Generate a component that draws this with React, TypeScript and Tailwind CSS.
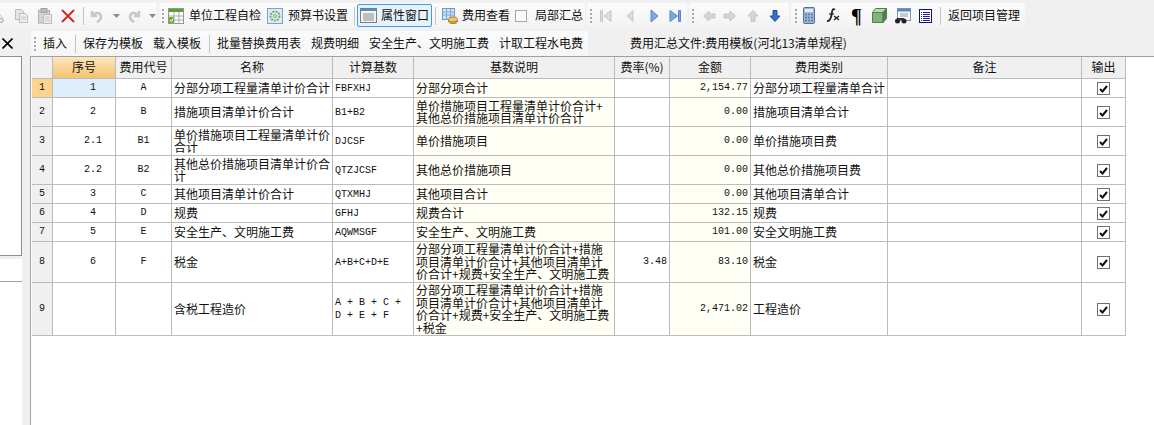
import type { ReactNode } from "react";

const font = "font-['Noto_Sans_CJK_SC','Noto_Sans',sans-serif]";

// toolbar bits
function Grip({ className = "" }: { className?: string }) {
  return (
    <div className={`flex flex-col gap-[2px] w-[2px] shrink-0 ${className}`}>
      {[0, 1, 2, 3].map((i) => (
        <div key={i} className="w-[2px] h-[2px] bg-[#a8a8a8]" />
      ))}
    </div>
  );
}

function Sep({ className = "" }: { className?: string }) {
  return <div className={`w-px h-[18px] bg-[#c4c4c4] shrink-0 ${className}`} />;
}

function Group({ className, children }: { className: string; children: ReactNode }) {
  return (
    <div className={`flex items-center h-[25px] rounded-[3px] bg-gradient-to-b from-[#fbfbfb] to-[#f3f3f3] shrink-0 ${className}`}>
      {children}
    </div>
  );
}

function Scissors() {
  return (
    <svg width="5" height="8" viewBox="0 0 5 8" className="shrink-0 mt-[6px]">
      <circle cx="1" cy="5.500" r="2" fill="none" stroke="#bdbdbd" strokeWidth="1.500" />
      <path d="M0 0l3 3" stroke="#c8c8c8" />
    </svg>
  );
}

function Doc({ className = "" }: { className?: string }) {
  return (
    <svg width="15" height="16" viewBox="0 0 15 16" className={`shrink-0 ${className}`}>
      <path d="M1.500 1.500h6l2 2v8h-8z" fill="#e6e6e6" stroke="#bdbdbd" />
      <path d="M5.500 5.500h6l2 2v7h-8z" fill="#eee" stroke="#bdbdbd" />
      <path d="M7 9h5M7 11h5" stroke="#c8c8c8" />
    </svg>
  );
}

function Paste({ className = "" }: { className?: string }) {
  return (
    <svg width="14" height="16" viewBox="0 0 14 16" className={`shrink-0 ${className}`}>
      <rect x="0.500" y="2.500" width="11" height="12.500" fill="#d4d4d4" stroke="#b0b0b0" />
      <rect x="3" y="0.500" width="6" height="4" fill="#bbb" stroke="#a4a4a4" />
      <path d="M5.500 6.500h8v9h-8z" fill="#efefef" stroke="#b8b8b8" />
      <path d="M7 9h5M7 11h5M7 13h5" stroke="#c8c8c8" />
    </svg>
  );
}

function RedX({ className = "" }: { className?: string }) {
  return (
    <svg width="14" height="14" viewBox="0 0 14 14" className={`shrink-0 ${className}`}>
      <path d="M1 1l12 12M13 1L1 13" stroke="#d8262c" strokeWidth="2" />
    </svg>
  );
}

function Undo({ flip = false, className = "" }: { flip?: boolean; className?: string }) {
  return (
    <svg width="13" height="14" viewBox="0 0 13 14" className={`shrink-0 ${flip ? "-scale-x-100" : ""} ${className}`}>
      <path d="M2 2v5h5" fill="none" stroke="#c8c8c8" strokeWidth="2.500" />
      <path d="M3 6c2-3 8-3 8 2 0 2-2 4-4 5" fill="none" stroke="#c8c8c8" strokeWidth="2.500" />
    </svg>
  );
}

function Caret({ className = "" }: { className?: string }) {
  return (
    <svg width="7" height="4" viewBox="0 0 7 4" className={`shrink-0 ${className}`}>
      <path d="M0 0h7L3.500 4z" fill="#8a8a8a" />
    </svg>
  );
}

function SheetIcon({ className = "" }: { className?: string }) {
  return (
    <svg width="16" height="16" viewBox="0 0 16 16" className={`shrink-0 ${className}`}>
      <rect x="0.500" y="0.500" width="15" height="15" fill="#fff" stroke="#8f9a8f" />
      <rect x="1" y="1" width="14" height="3" fill="#5c9e3c" />
      <path d="M1 8h14M1 12h14M6 4v12M11 4v12" stroke="#a9a9a9" />
      <rect x="1" y="9" width="5" height="6" fill="#6fae32" />
      <path d="M2 12l1.500 1.500L5 10.500" fill="none" stroke="#fff" />
    </svg>
  );
}

function GearIcon({ className = "" }: { className?: string }) {
  return (
    <svg width="16" height="16" viewBox="0 0 16 16" className={`shrink-0 ${className}`}>
      <rect x="0.500" y="0.500" width="15" height="15" fill="#dcebf8" stroke="#7ba2c8" />
      <circle cx="8" cy="8" r="4.500" fill="none" stroke="#6fb26a" strokeWidth="2" strokeDasharray="2 1" />
      <circle cx="8" cy="8" r="1.500" fill="#e8f4e4" stroke="#6fb26a" />
    </svg>
  );
}

function WindowIcon({ className = "" }: { className?: string }) {
  return (
    <svg width="17" height="15" viewBox="0 0 17 15" className={`shrink-0 ${className}`}>
      <rect x="0.500" y="0.500" width="16" height="14" fill="#f4f4ec" stroke="#70808c" />
      <rect x="1" y="1" width="15" height="2" fill="#4d8fce" />
      <path d="M3 6h11M3 8h11M3 10h11M3 12h11" stroke="#8a8a8a" />
    </svg>
  );
}

function CostIcon({ className = "" }: { className?: string }) {
  return (
    <svg width="16" height="16" viewBox="0 0 16 16" className={`shrink-0 ${className}`}>
      <rect x="0.500" y="0.500" width="12" height="11" fill="#cfe3f5" stroke="#6f9ac4" />
      <path d="M1 4h11M1 7h11M4.500 1v10M8.500 1v10" stroke="#7fa9d1" />
      <ellipse cx="11" cy="13" rx="4.500" ry="2.500" fill="#dcb04e" stroke="#a88232" />
      <ellipse cx="11" cy="11.500" rx="4.500" ry="2.500" fill="#ecc86a" stroke="#a88232" />
    </svg>
  );
}

function Arrow({ d, fill, stroke, className = "" }: { d: string; fill: string; stroke: string; className?: string }) {
  return (
    <svg width="14" height="14" viewBox="0 0 14 14" className={`shrink-0 ${className}`}>
      <path d={d} fill={fill} stroke={stroke} />
    </svg>
  );
}

function CalcIcon({ className = "" }: { className?: string }) {
  return (
    <svg width="12" height="17" viewBox="0 0 12 17" className={`shrink-0 ${className}`}>
      <rect x="0.500" y="0.500" width="11" height="16" rx="1" fill="#9db4d6" stroke="#5a6f94" />
      <rect x="2" y="2" width="8" height="3" fill="#e4edf7" />
      <path d="M2 7.500h8M2 10.500h8M2 13.500h8" stroke="#5c78a6" strokeWidth="1.500" strokeDasharray="2 1" />
    </svg>
  );
}

function FxIcon({ className = "" }: { className?: string }) {
  return (
    <svg width="15" height="15" viewBox="0 0 15 15" className={`shrink-0 ${className}`}>
      <path d="M9 1.500C6 0 6 4 5.500 7S4.500 13.500 1 13" fill="none" stroke="#222" strokeWidth="1.800" />
      <path d="M3 6h5" stroke="#222" strokeWidth="1.200" />
      <path d="M8 8l5 4M13 8l-5 4" stroke="#222" strokeWidth="1.400" />
    </svg>
  );
}

function CubeIcon({ className = "" }: { className?: string }) {
  return (
    <svg width="15" height="15" viewBox="0 0 15 15" className={`shrink-0 ${className}`}>
      <path d="M.5 4.500h10.500v10H.5z" fill="#7fb577" stroke="#5a7a56" />
      <path d="M.5 4.500L3.500.5h11l-3.500 4z" fill="#b8d8ae" stroke="#5a7a56" />
      <path d="M11 4.500l3.500-4v10l-3.500 4z" fill="#4f7f4a" stroke="#5a7a56" />
    </svg>
  );
}

function FindIcon({ className = "" }: { className?: string }) {
  return (
    <svg width="17" height="16" viewBox="0 0 17 16" className={`shrink-0 ${className}`}>
      <rect x="3.500" y="0.500" width="13" height="12" fill="#f4f6fa" stroke="#7d93b5" />
      <rect x="4" y="1" width="12" height="2.500" fill="#4f86d0" />
      <path d="M6 6h8M6 8h8" stroke="#9a9a9a" />
      <circle cx="3.500" cy="13" r="2.500" fill="#222" />
      <circle cx="10" cy="13" r="2.500" fill="#222" />
      <rect x="3" y="10" width="7" height="2" fill="#333" />
    </svg>
  );
}

function ListIcon({ className = "" }: { className?: string }) {
  return (
    <svg width="13" height="14" viewBox="0 0 13 14" className={`shrink-0 ${className}`}>
      <rect x="0.500" y="0.500" width="12" height="13" fill="#fff" stroke="#10106e" />
      <path d="M2 3.500h1M4 3.500h7M2 5.500h1M4 5.500h7M2 7.500h1M4 7.500h7M2 9.500h1M4 9.500h7M2 11.500h1M4 11.500h7" stroke="#1c1c9c" />
    </svg>
  );
}

function CheckBox() {
  return (
    <span className="inline-flex items-center justify-center w-[13px] h-[13px] border border-[#707070] bg-white align-middle">
      <svg width="9" height="8" viewBox="0 0 9 8">
        <path d="M1 4l2.500 2.500L8 1" fill="none" stroke="#111" strokeWidth="2" />
      </svg>
    </span>
  );
}

type Row = {
  h: string;
  no: string;
  seq: string;
  code: string;
  name: string;
  base: string;
  desc: string;
  rate: string;
  amount: string;
  kind: string;
};

const rows: Row[] = [
  { h: "h-[19px]", no: "1", seq: "1", code: "A", name: "分部分项工程量清单计价合计", base: "FBFXHJ", desc: "分部分项合计", rate: "", amount: "2,154.77", kind: "分部分项工程量清单合计" },
  { h: "h-[29px]", no: "2", seq: "2", code: "B", name: "措施项目清单计价合计", base: "B1+B2", desc: "单价措施项目工程量清单计价合计+\n其他总价措施项目清单计价合计", rate: "", amount: "0.00", kind: "措施项目清单合计" },
  { h: "h-[29px]", no: "3", seq: "2.1", code: "B1", name: "单价措施项目工程量清单计价合计", base: "DJCSF", desc: "单价措施项目", rate: "", amount: "0.00", kind: "单价措施项目费" },
  { h: "h-[29px]", no: "4", seq: "2.2", code: "B2", name: "其他总价措施项目清单计价合计", base: "QTZJCSF", desc: "其他总价措施项目", rate: "", amount: "0.00", kind: "其他总价措施项目费" },
  { h: "h-[19px]", no: "5", seq: "3", code: "C", name: "其他项目清单计价合计", base: "QTXMHJ", desc: "其他项目合计", rate: "", amount: "0.00", kind: "其他项目清单合计" },
  { h: "h-[19px]", no: "6", seq: "4", code: "D", name: "规费", base: "GFHJ", desc: "规费合计", rate: "", amount: "132.15", kind: "规费" },
  { h: "h-[19px]", no: "7", seq: "5", code: "E", name: "安全生产、文明施工费", base: "AQWMSGF", desc: "安全生产、文明施工费", rate: "", amount: "101.00", kind: "安全文明施工费" },
  { h: "h-[41px]", no: "8", seq: "6", code: "F", name: "税金", base: "A+B+C+D+E", desc: "分部分项工程量清单计价合计+措施\n项目清单计价合计+其他项目清单计\n价合计+规费+安全生产、文明施工费", rate: "3.48", amount: "83.10", kind: "税金" },
  { h: "h-[53px]", no: "9", seq: "", code: "", name: "含税工程造价", base: "A + B + C +\nD + E + F", desc: "分部分项工程量清单计价合计+措施\n项目清单计价合计+其他项目清单计\n价合计+规费+安全生产、文明施工费\n+税金", rate: "", amount: "2,471.02", kind: "工程造价" },
];

const heads = ["序号", "费用代号", "名称", "计算基数", "基数说明", "费率(%)", "金额", "费用类别", "备注", "输出"];
const line = "border-r border-b border-[#bcbcbc]";
const mono = "font-['Liberation_Mono',monospace] text-[10px]";

export default function App() {
  return (
    <div className={`w-[1154px] h-[425px] overflow-hidden bg-white text-[12px] leading-[12.5px] text-[#111] ${font}`}>
      {/* main toolbar */}
      <div className="flex items-center gap-[2px] h-[31px] pb-[3px] pt-[3px] bg-[#f0f0f0]">
        <Group className="w-[157px]">
          <Scissors />
          <Doc className="ml-[9px]" />
          <Paste className="ml-[9px]" />
          <RedX className="ml-[9px]" />
          <Sep className="ml-[8px]" />
          <Undo className="ml-[6px]" />
          <Caret className="ml-[10px]" />
          <Undo flip className="ml-[8px]" />
          <Caret className="ml-[8px]" />
        </Group>
        <Group className="w-[426px]">
          <Grip className="ml-[3px]" />
          <SheetIcon className="ml-[4px]" />
          <span className="ml-[5px] shrink-0">单位工程自检</span>
          <GearIcon className="ml-[6px]" />
          <span className="ml-[5px] shrink-0">预算书设置</span>
          <Sep className="ml-[6px]" />
          <div className="flex items-center w-[75px] h-[23px] ml-[2px] border border-[#3d9be9] bg-[#e6f3fc] rounded-[2px] shrink-0">
            <WindowIcon className="ml-[2px]" />
            <span className="ml-[4px] shrink-0">属性窗口</span>
          </div>
          <Sep className="ml-[3px]" />
          <CostIcon className="ml-[6px]" />
          <span className="ml-[4px] shrink-0">费用查看</span>
          <span className="ml-[5px] w-[12px] h-[12px] border border-[#a8a8a8] bg-[#fbfbfb] shrink-0" />
          <span className="ml-[8px] shrink-0">局部汇总</span>
        </Group>
        <Group className="w-[100px]">
          <Grip className="ml-[3px]" />
          <Arrow className="ml-[7px]" d="M1.500 1.500h2v11h-2zM12 1.500v11L5 7z" fill="#dcdcdc" stroke="#c8c8c8" />
          <Arrow className="ml-[10px]" d="M10 1.500v11L4 7z" fill="#dcdcdc" stroke="#c8c8c8" />
          <Arrow className="ml-[10px]" d="M4 1v12l7-6z" fill="#7da7e4" stroke="#5c86c8" />
          <Arrow className="ml-[7px]" d="M10.500 1.500h2v11h-2zM2 1.500v11L9.500 7z" fill="#7da7e4" stroke="#5c86c8" />
        </Group>
        <Group className="w-[100px]">
          <Grip className="ml-[3px]" />
          <Arrow className="ml-[8px]" d="M1.500 7L7 2v3h6v4H7v3z" fill="#d6d6d6" stroke="#c4c4c4" />
          <Arrow className="ml-[7px]" d="M12.500 7L7 2v3H1v4h6v3z" fill="#d6d6d6" stroke="#c4c4c4" />
          <Arrow className="ml-[9px]" d="M7 1.500L12 7H9v5.500H5V7H2z" fill="#d6d6d6" stroke="#c4c4c4" />
          <Arrow className="ml-[8px]" d="M7 12.500L12 7H9V1.500H5V7H2z" fill="#2f6fc8" stroke="#1f4f9c" />
        </Group>
        <Group className="w-[234px]">
          <Grip className="ml-[4px]" />
          <CalcIcon className="ml-[6px]" />
          <FxIcon className="ml-[11px]" />
          <span className="ml-[10px] w-[10px] shrink-0 text-[20px] font-bold leading-none text-black font-['Liberation_Serif',serif]">¶</span>
          <CubeIcon className="ml-[11px]" />
          <FindIcon className="ml-[7px]" />
          <ListIcon className="ml-[8px]" />
          <Sep className="ml-[8px]" />
          <span className="ml-[7px] shrink-0">返回项目管理</span>
        </Group>
      </div>

      {/* secondary toolbar */}
      <div className="flex items-center h-[25px] bg-[#f0f0f0]">
        <svg width="11" height="11" viewBox="0 0 11 11" className="ml-[2px] shrink-0">
          <path d="M.5.5l10 10M10.500.5l-10 10" stroke="#000" strokeWidth="1.600" />
        </svg>
        <div className="flex items-center h-[25px] w-[557px] ml-[18px] rounded-[3px] bg-gradient-to-b from-[#fbfbfb] to-[#f5f5f5] shrink-0">
          <Grip className="ml-[3px]" />
          <span className="ml-[7px] shrink-0">插入</span>
          <Sep className="ml-[8px]" />
          <span className="ml-[7px] shrink-0">保存为模板</span>
          <span className="ml-[10px] shrink-0">载入模板</span>
          <Sep className="ml-[8px]" />
          <span className="ml-[7px] shrink-0">批量替换费用表</span>
          <span className="ml-[10px] shrink-0">规费明细</span>
          <span className="ml-[10px] shrink-0">安全生产、文明施工费</span>
          <span className="ml-[10px] shrink-0">计取工程水电费</span>
        </div>
        <span className="ml-[42px] shrink-0">费用汇总文件:费用模板(河北13清单规程)</span>
      </div>

      {/* body */}
      <div className="flex h-[369px]">
        <div className="w-[31px] flex shrink-0 border-r border-[#a0a0a0] bg-[#f0f0f0]">
          <div className="w-[22px] shrink-0 flex flex-col">
            <div className="h-[200px] bg-white border-t border-r border-b border-[#8c8c96]" />
            <div className="h-[3px]" />
            <div className="h-[23px] bg-white border-b border-[#a0a0a0]" />
            <div className="flex-1 bg-white" />
          </div>
        </div>
        <div className="flex-1 border-t border-[#a0a0a0] pl-px">
          <table className="table-fixed border-separate border-spacing-0 w-[1094px]">
            <colgroup>
              <col className="w-[21px]" />
              <col className="w-[63px]" />
              <col className="w-[56px]" />
              <col className="w-[161px]" />
              <col className="w-[81px]" />
              <col className="w-[201px]" />
              <col className="w-[55px]" />
              <col className="w-[81px]" />
              <col className="w-[137px]" />
              <col className="w-[194px]" />
              <col className="w-[44px]" />
            </colgroup>
            <thead>
              <tr>
                <th className={`h-[22px] bg-[#f0f0f0] ${line}`} />
                {heads.map((t, i) => (
                  <th
                    key={t}
                    className={`h-[22px] p-0 font-normal text-center ${line} ${
                      i === 0 ? "bg-gradient-to-b from-[#fbe6bd] to-[#f4c370]" : "bg-[#f0f0f0]"
                    }`}
                  >
                    {t}
                  </th>
                ))}
              </tr>
            </thead>
            <tbody>
              {rows.map((r, i) => (
                <tr key={r.no}>
                  <td className={`${r.h} p-0 text-center ${mono} ${line} ${i === 0 ? "bg-[#fbd58e]" : "bg-[#f0f0f0]"}`}>{r.no}</td>
                  <td className={`p-0 pl-[18px] text-center ${mono} ${line} ${i === 0 ? "bg-[#dfeefc]" : ""}`}>{r.seq}</td>
                  <td className={`p-0 text-center ${mono} ${line}`}>{r.code}</td>
                  <td className={`p-0 pl-[2px] ${line}`}>{r.name}</td>
                  <td className={`p-0 pl-[2px] ${mono} leading-[13px] whitespace-pre-line ${line}`}>{r.base}</td>
                  <td className={`p-0 pl-[2px] bg-[#fffff6] whitespace-pre-line ${line}`}>{r.desc}</td>
                  <td className={`p-0 pr-[2px] text-right ${mono} ${line}`}>{r.rate}</td>
                  <td className={`p-0 pr-[2px] text-right bg-[#fffff6] ${mono} ${line}`}>{r.amount}</td>
                  <td className={`p-0 pl-[2px] whitespace-nowrap overflow-hidden ${line}`}>{r.kind}</td>
                  <td className={`p-0 ${line}`} />
                  <td className={`p-0 text-center ${line}`}>
                    <CheckBox />
                  </td>
                </tr>
              ))}
            </tbody>
          </table>
        </div>
      </div>
    </div>
  );
}
